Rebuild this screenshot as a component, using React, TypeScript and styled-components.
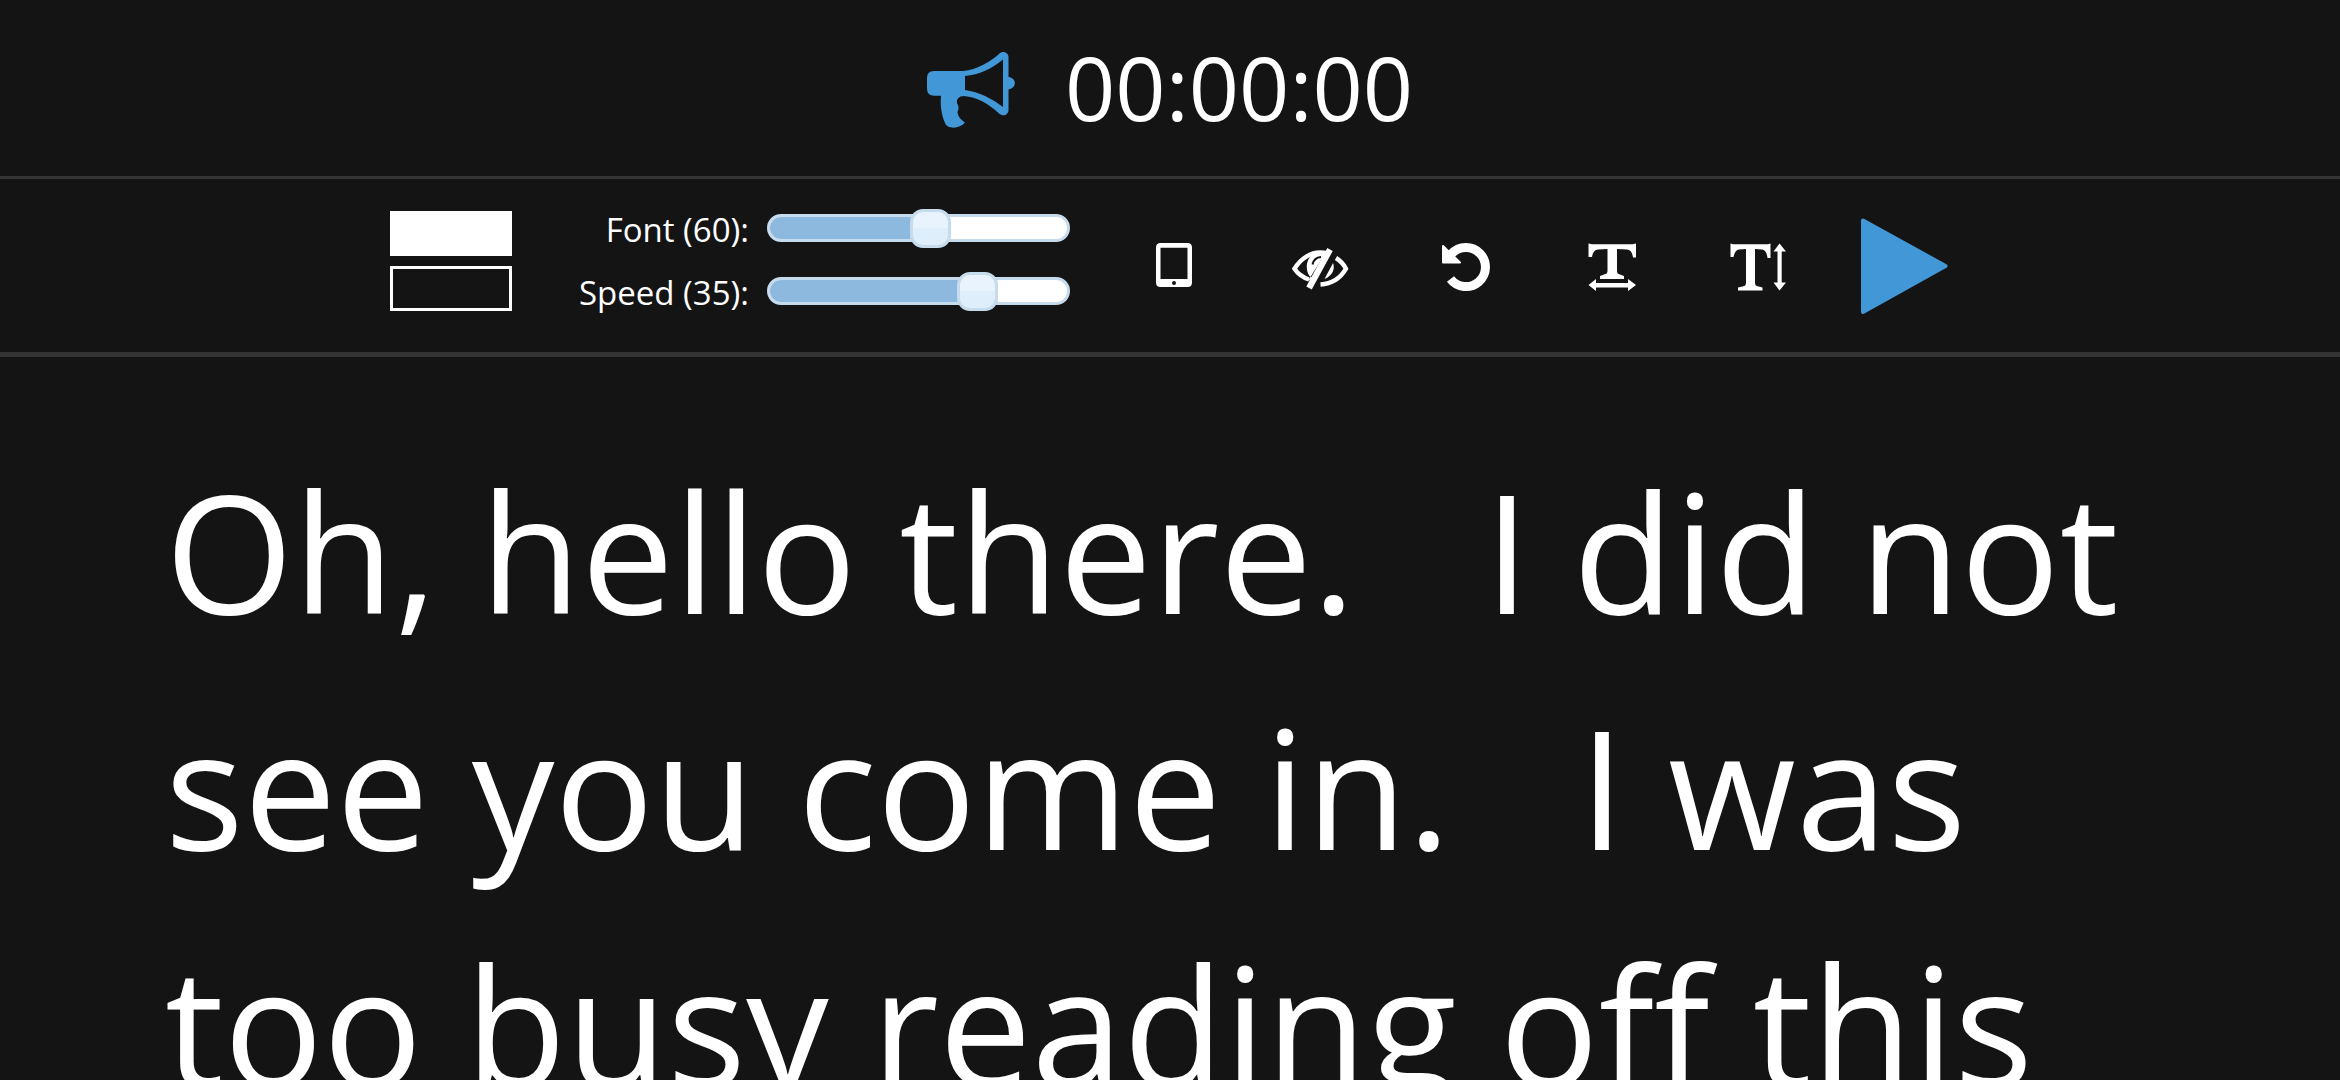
import React from "react";
import styled, { createGlobalStyle } from "styled-components";

const Global = createGlobalStyle`
  *, *::before, *::after { box-sizing: border-box; }
  html, body { margin: 0; background: #141414; }
  body { overflow: hidden; font-family: "Open Sans", "Noto Sans", sans-serif; color: #fff; }
`;

const Page = styled.div`
  display: flex;
  flex-direction: column;
  width: 2340px;
  height: 1080px;
  overflow: hidden;
  background: #141414;
`;

const Header = styled.header`
  display: flex;
  flex: none;
  align-items: flex-start;
  height: 179px;
  padding: 27px 0 0 927px;
  border-bottom: 3px solid #333;

  svg { margin-top: 25px; }
`;

const Clock = styled.h1`
  margin: 0 0 0 50px;
  font-size: 88px;
  font-weight: 400;
  line-height: 120px;
`;

const Toolbar = styled.nav`
  display: flex;
  flex: none;
  align-items: flex-start;
  height: 178px;
  padding: 0 390px;
  border-bottom: 5px solid #333;
`;

const Swatches = styled.div`
  display: flex;
  flex-direction: column;
  gap: 10px;
  width: 122px;
  margin-top: 32px;
`;

const Swatch = styled.button<{ $color: string }>`
  height: 45px;
  padding: 0;
  border: 3px solid #fff;
  background: ${(p) => p.$color};
`;

const Sliders = styled.div`
  display: grid;
  grid-template-columns: 237px 303px;
  grid-template-rows: 62px 64px;
  column-gap: 18px;
  align-items: center;
  margin: 18px 0 0 0;
`;

const Label = styled.label`
  padding-top: 2px;
  font-size: 33px;
  line-height: 45px;
  text-align: right;
  white-space: nowrap;
`;

const Track = styled.div`
  position: relative;
  display: flex;
  width: 303px;
  height: 28px;
  border: 3px solid #c6dbeb;
  border-radius: 14px;
  background: #fff;
`;

const Fill = styled.div`
  height: 22px;
  border-radius: 11px 0 0 11px;
  background: #8db9df;
`;

const Handle = styled.div`
  position: absolute;
  top: -8px;
  width: 41px;
  height: 39px;
  margin-left: -20px;
  border: 3px solid #c6dbeb;
  border-radius: 13px;
  background: linear-gradient(#e8f3fd 50%, #deeefb 50%);
`;

const IconButton = styled.button<{ $w: number; $left: number; $top: number }>`
  flex: none;
  width: ${(p) => p.$w}px;
  margin: ${(p) => p.$top}px 0 0 ${(p) => p.$left}px;
  padding: 0;
  border: 0;
  background: none;
  color: #fff;
  line-height: 0;
`;

const Script = styled.main`
  flex: 1;
  padding: 74.5px 165px 0;
  overflow: hidden;
`;

const Line = styled.p`
  margin: 0;
  font-size: 165px;
  line-height: 236.5px;
  white-space: pre;
  font-variant-ligatures: none;
`;

const Megaphone = () => (
  <svg width="88" height="76" viewBox="0 0 88 76" fill="#4297d7">
    <path
      fillRule="evenodd"
      d="M7 19H36C50 18 64 9 72 2C76 -2 81.500 1 81.500 5V25C90 26 90 36 81.500 37.500V58C81.500 63 76 65 72 61.500C62 52 50 45 37 44C31 44 29.500 48 30 51L31.500 54.500V57L30.500 60C31 64 33 67 38 70.500C33 77 20 77.500 18 71C15 64 13 56 14 43.700H7Q0 43.700 0 36.500V26Q0 19 7 19ZM38 24V38C52 40 65 46.500 76 55V7.500C65 16.500 52 23 38 24Z"
    />
  </svg>
);

const Tablet = () => (
  <svg width="36" height="44" viewBox="0 0 36 44" fill="currentColor">
    <path
      fillRule="evenodd"
      d="M4.500 0H31.500Q36 0 36 4.500V39.500Q36 44 31.500 44H4.500Q0 44 0 39.500V4.500Q0 0 4.500 0ZM4.500 4.700V36H31.500V4.700ZM18 38A2 2 0 1 0 18 42A2 2 0 1 0 18 38Z"
    />
  </svg>
);

const EyeOff = () => (
  <svg width="57" height="42" viewBox="0 0 57 42" fill="none" stroke="currentColor">
    <path d="M17 31.500C10 29 5 24.500 2.500 20.700C9 10 19 4.500 28 4.500C30.500 4.500 33 4.700 35 5.300" strokeWidth="4.400" />
    <path d="M44 10C49 13 52 17 54 20.700C48 31 39 36 28.500 36.500" strokeWidth="4.400" />
    <path d="M34 4L16 33L21 30L17.500 28C13 22 14 11 21 6Z" fill="currentColor" stroke="none" />
    <path d="M41 15C43.500 21 40 28 32.500 31Z" fill="currentColor" stroke="none" />
    <path d="M20.500 16.500Q22 9.500 29 9" stroke="#141414" strokeWidth="2" />
    <path d="M38 1.500L17 40" strokeWidth="6.200" />
  </svg>
);

const Undo = () => (
  <svg width="49" height="49" viewBox="0 0 49 49" fill="none" stroke="currentColor">
    <path d="M9.500 11A19.500 19.500 0 1 1 8.500 36" strokeWidth="9" />
    <path d="M1 3L18 19.500H1Z" fill="currentColor" strokeWidth="2" strokeLinejoin="round" />
  </svg>
);

const TextWidth = () => (
  <svg width="49" height="48" viewBox="0 0 49 48" fill="currentColor">
    <path d="M.5 .5L4 1.200H44.500L48 .5V14.500H45Q44 7 39 6.500L29 6V28Q29 31 32 31.500L36 33V36H12V33L16 31.500Q19.500 31 19.500 28V6L10 6.500Q5 7 4 14H.5Z" />
    <path d="M.5 42L8 36V40H40V36L48 42L40 48V44.500H8V48Z" />
  </svg>
);

const TextHeight = () => (
  <svg width="56" height="48" viewBox="0 0 56 48" fill="currentColor">
    <path d="M.5 .5L3 1.200H38L40.500 .5V15H37.500Q36.500 7 32 6.500L25 6V40Q25 43 28.500 43.500L32.500 44.500V47.500H8V44.500L12.500 43.500Q16 43 16 40V6L9 6.500Q5 7 3.500 14H.5Z" />
    <path d="M49.500 .5L56 8.500H51.700V39.500H56L49.500 47.500L43.500 39.500H47.500V8.500H43.500Z" />
  </svg>
);

const Play = () => (
  <svg width="88" height="97" viewBox="0 0 88 97" fill="#4297d7" stroke="#4297d7">
    <path d="M3 2.500L85.500 48L3 94Z" strokeWidth="4" strokeLinejoin="round" />
  </svg>
);

const sliders = [
  { name: "Font", value: 60, percent: 54 },
  { name: "Speed", value: 35, percent: 69.7 },
];

const tools = [
  { id: "tablet", Icon: Tablet, w: 36, left: 86, top: 64 },
  { id: "flip", Icon: EyeOff, w: 57, left: 100, top: 69 },
  { id: "reset", Icon: Undo, w: 49, left: 93, top: 64 },
  { id: "width", Icon: TextWidth, w: 49, left: 97, top: 64 },
  { id: "height", Icon: TextHeight, w: 56, left: 93, top: 64 },
  { id: "play", Icon: Play, w: 88, left: 74, top: 39 },
];

const lines = ["Oh, hello there.\u00a0\u00a0 I did not", "see you come in.\u00a0\u00a0 I was", "too busy reading off this"];

export default function App() {
  return (
    <Page>
      <Global />
      <Header>
        <Megaphone />
        <Clock>00:00:00</Clock>
      </Header>
      <Toolbar>
        <Swatches>
          <Swatch $color="#fff" aria-label="Text color" />
          <Swatch $color="#141414" aria-label="Background color" />
        </Swatches>
        <Sliders>
          {sliders.map((s) => (
            <React.Fragment key={s.name}>
              <Label>
                {s.name} ({s.value}):
              </Label>
              <Track>
                <Fill style={{ width: `${s.percent}%` }} />
                <Handle style={{ left: `${s.percent}%` }} />
              </Track>
            </React.Fragment>
          ))}
        </Sliders>
        {tools.map(({ id, Icon, w, left, top }) => (
          <IconButton key={id} $w={w} $left={left} $top={top} aria-label={id}>
            <Icon />
          </IconButton>
        ))}
      </Toolbar>
      <Script>
        {lines.map((l) => (
          <Line key={l}>{l}</Line>
        ))}
      </Script>
    </Page>
  );
}
